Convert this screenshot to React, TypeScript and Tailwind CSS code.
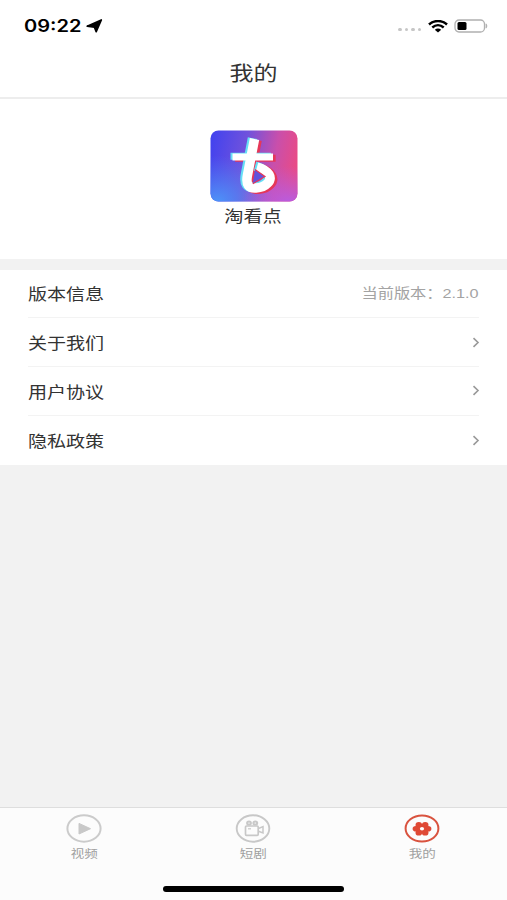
import React from 'react';

interface MenuItem {
  label: string;
  value?: string;
}

const menuItems: MenuItem[] = [
  { label: '版本信息', value: '2.1.0' },
  { label: '关于我们' },
  { label: '用户协议' },
  { label: '隐私政策' }
];

const StatusBar: React.FC = () => (
  <div className="flex h-[50px] items-center justify-between pl-6 pr-[18px] pt-[2px]">
    <div className="flex items-center">
      <span className="w-[57px] origin-left scale-x-[1.18] whitespace-nowrap pt-px font-[Inter] text-[17px] font-semibold leading-none text-black">
        09:22
      </span>
      <svg className="ml-[5px] h-[14px] w-[17px]" viewBox="0 0 17 14">
        <path d="M15.3 1 10.2 12.6 8.4 8.2 1.2 7.2Z" fill="#000" stroke="#000" strokeWidth="1.7" strokeLinejoin="round" />
      </svg>
    </div>
    <div className="flex items-center">
      <div className="mr-[7px] mt-[7px] flex gap-[3px]">
        {[0, 1, 2, 3].map((i) => (
          <span key={i} className="h-[3px] w-[3.5px] rounded-full bg-[#c6c6c6]"></span>
        ))}
      </div>
      <svg className="h-[13px] w-[20px]" viewBox="0 0 20 13" fill="none" stroke="#000">
        <path d="M1 4.5C6-.1 14-.1 19 4.5" strokeWidth="2.5" />
        <path d="M4.3 7.5C7.7 4.4 12.3 4.4 15.7 7.5" strokeWidth="2.4" />
        <path d="M10 12.6 6.8 9.7Q10 7.4 13.2 9.7Z" fill="#000" stroke="none" />
      </svg>
      <svg className="ml-[6px] h-[14px] w-[35px]" viewBox="0 0 35 14">
        <rect x="1" y="1" width="29.5" height="12" rx="4" fill="none" stroke="#b0b0b0" strokeWidth="1.3" />
        <rect x="3.5" y="3" width="9" height="8" rx="1.5" fill="#000" />
        <path d="M32 4.8Q34 7 32 9.2Z" fill="#b0b0b0" stroke="#b0b0b0" strokeWidth=".7" />
      </svg>
    </div>
  </div>
);

const AppLogo: React.FC = () => (
  <svg className="h-[72px] w-[88px]" viewBox="0 0 88 72">
    <defs>
      <linearGradient id="logoBase" x1="0" y1=".2" x2="1" y2=".35">
        <stop offset="0" stopColor="#4343ee" />
        <stop offset=".4" stopColor="#7052dc" />
        <stop offset=".75" stopColor="#c94fab" />
        <stop offset="1" stopColor="#e84b87" />
      </linearGradient>
      <radialGradient id="logoBlue" cx=".08" cy="1" r=".65">
        <stop offset="0" stopColor="#4d93f8" />
        <stop offset="1" stopColor="#4d80f6" stopOpacity="0" />
      </radialGradient>
      <radialGradient id="logoPurple" cx=".9" cy="1.05" r=".55">
        <stop offset="0" stopColor="#b55de6" />
        <stop offset="1" stopColor="#b55de6" stopOpacity="0" />
      </radialGradient>
      <g id="logoMark" fill="none">
        <path d="M22.5 27H63" strokeWidth="7" />
        <path d="M44.5 9 37.5 45C35.5 55 39 58.5 46 58C56 57.5 62.5 50.5 59 44.5C57 41 52.5 38.5 47 37" strokeWidth="9.5" />
      </g>
    </defs>
    <rect x=".5" y=".5" width="87" height="71" rx="8" fill="url(#logoBase)" />
    <rect x=".5" y=".5" width="87" height="71" rx="8" fill="url(#logoBlue)" />
    <rect x=".5" y=".5" width="87" height="71" rx="8" fill="url(#logoPurple)" />
    <use href="#logoMark" x="2.6" y="1.2" stroke="#e63758" />
    <use href="#logoMark" x="-2" y="-.8" stroke="#65dff5" />
    <use href="#logoMark" stroke="#fff" />
    <path d="M45 39.5 55 46.5 42.8 53.8Z" fill="#6254dc" />
    <path d="M45 39.5 55 46.5 42.8 53.8" fill="none" stroke="#e63758" strokeWidth="1.2" />
  </svg>
);

const VideoIcon: React.FC = () => (
  <svg className="h-[29px] w-[36px]" viewBox="0 0 36 29">
    <ellipse cx="18" cy="14.5" rx="16.6" ry="13.2" fill="none" stroke="#cbcbcb" strokeWidth="2" />
    <path d="M13 9.4 24.5 14.7 13 20Z" fill="#c8c8c8" stroke="#c8c8c8" strokeWidth="1" strokeLinejoin="round" />
  </svg>
);

const DramaIcon: React.FC = () => (
  <svg className="h-[29px] w-[36px]" viewBox="0 0 36 29" fill="none" stroke="#c8c8c8">
    <ellipse cx="18" cy="14.5" rx="16.3" ry="13.2" strokeWidth="1.9" />
    <rect x="10.5" y="12" width="12.7" height="9.3" rx="1" strokeWidth="1.7" />
    <ellipse cx="14" cy="9" rx="1.9" ry="1.6" strokeWidth="2" />
    <ellipse cx="20.3" cy="9" rx="1.9" ry="1.6" strokeWidth="2" />
    <path d="M23.5 14.5 28 12.6V19L23.5 17.2" strokeWidth="1.5" />
    <path d="M13 14.8H16" strokeWidth="1.2" />
  </svg>
);

const MineIcon: React.FC = () => (
  <svg className="h-[29px] w-[36px]" viewBox="0 0 36 29">
    <ellipse cx="18" cy="14.5" rx="16.4" ry="13" fill="none" stroke="#d9533f" strokeWidth="2" />
    <g fill="#df4935">
      <ellipse cx="14.8" cy="10.9" rx="3.3" ry="2.9" />
      <ellipse cx="21.2" cy="10.9" rx="3.3" ry="2.9" />
      <ellipse cx="12" cy="14.8" rx="3.4" ry="2.8" />
      <ellipse cx="24" cy="14.8" rx="3.4" ry="2.8" />
      <ellipse cx="14.8" cy="18.7" rx="3.3" ry="2.9" />
      <ellipse cx="21.2" cy="18.7" rx="3.3" ry="2.9" />
      <ellipse cx="18" cy="14.8" rx="5" ry="4.5" />
    </g>
    <ellipse cx="18" cy="14.8" rx="2.1" ry="1.7" fill="#fff" />
  </svg>
);

const tabs = [
  { label: '视频', icon: VideoIcon },
  { label: '短剧', icon: DramaIcon },
  { label: '我的', icon: MineIcon }
];

const App: React.FC = () => {
  return (
    <div className="flex h-[900px] w-full flex-col overflow-hidden bg-[#f2f2f2] font-['Noto_Sans_CJK_SC',sans-serif] text-[#333]">
      <header className="h-[99px] shrink-0 border-b-2 border-[#ededed] bg-white">
        <StatusBar />
        <h1 className="scale-x-[1.2] text-center text-[20px] leading-[46px]">我的</h1>
      </header>

      {/* Profile */}
      <section className="flex h-[160px] shrink-0 flex-col items-center bg-white pt-[31px]">
        <AppLogo />
        <p className="mt-px scale-x-[1.2] text-[16px] leading-6">淘看点</p>
      </section>

      {/* Menu */}
      <ul className="mt-[10.5px] shrink-0 bg-white px-7">
        {menuItems.map((item) => (
          <li
            key={item.label}
            className="flex h-[48.75px] items-center justify-between border-b border-[#f3f3f3] last:border-b-0"
          >
            <span className="origin-left scale-x-[1.19] text-[16px] leading-6">{item.label}</span>
            {item.value ? (
              <span className="origin-right scale-x-[1.2] text-[13.5px] leading-5 text-[#a3a3a3]">
                当前版本：<span className="font-['Liberation_Sans']">{item.value}</span>
              </span>
            ) : (
              <svg className="mr-[-1px] h-[11px] w-[8px]" viewBox="0 0 8 11">
                <path d="M1.5 1.2 6 5.5 1.5 9.8" fill="none" stroke="#999" strokeWidth="1.6" />
              </svg>
            )}
          </li>
        ))}
      </ul>

      {/* Bottom tabs */}
      <nav className="mt-auto h-[93px] shrink-0 border-t-[1.5px] border-[#dedede] bg-[#fcfcfc]">
        <div className="grid h-[77.5px] grid-cols-3">
          {tabs.map((tab) => {
            const Icon = tab.icon;
            return (
              <div key={tab.label} className="flex flex-col items-center pr-px pt-[6px]">
                <Icon />
                <span className="mt-[2px] scale-x-[1.2] text-[11.3px] leading-4 text-[#a0a0a0]">{tab.label}</span>
              </div>
            );
          })}
        </div>
        <div className="mx-auto h-[6px] w-[181px] rounded-full bg-black"></div>
      </nav>
    </div>
  );
};

export default App;
